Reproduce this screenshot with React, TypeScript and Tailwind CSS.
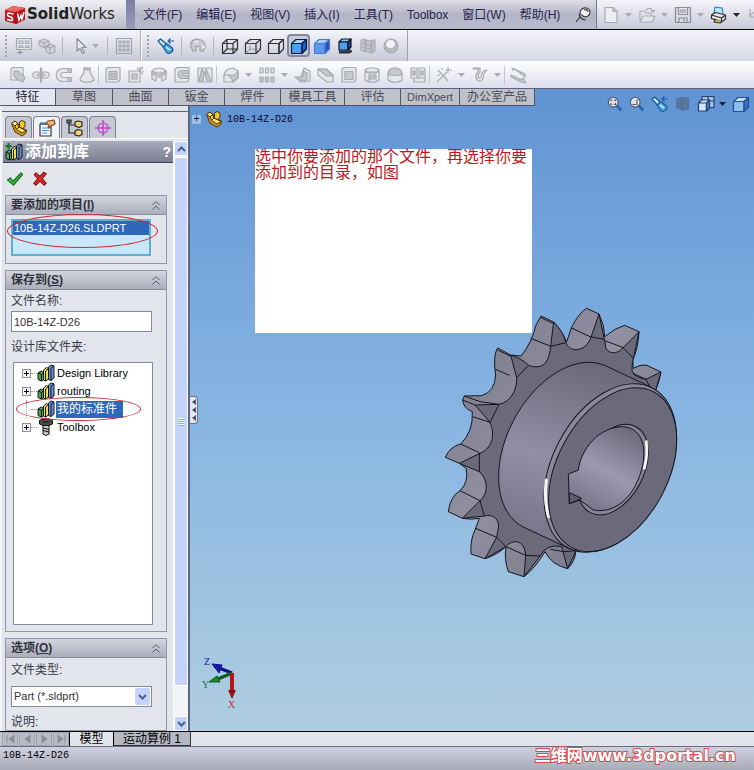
import { useState } from "react";
import type { ReactNode } from "react";

const DARK = "#17172b";
const DIM = "#a8aab2";

type GlyphProps = { children: ReactNode; size?: "sm" | "md"; stroke?: string; fill?: string };

const Glyph = ({ children, size = "md", stroke = DIM, fill = "none" }: GlyphProps) => (
  <svg
    viewBox="0 0 18 18"
    className={size === "md" ? "h-[18px] w-[18px] shrink-0" : "h-4 w-4 shrink-0"}
    fill={fill}
    stroke={stroke}
    strokeWidth="1.2"
    strokeLinejoin="round"
    aria-hidden="true"
  >
    {children}
  </svg>
);

const Cube = ({ top, front, side, line = DARK }: { top: string; front: string; side: string; line?: string }) => (
  <Glyph stroke={line}>
    <path d="M1.500 6.500 6 2.500h10.500L12 6.500Z" fill={top} />
    <path d="M1.500 6.500H12V16.500H1.500Z" fill={front} />
    <path d="M12 6.500 16.500 2.500v9.500L12 16.500Z" fill={side} />
  </Glyph>
);

const Flashlight = () => (
  <Glyph stroke="#1b5c93">
    <path d="M1 4 3.500 2l6 5-3 3Z" fill="#8fd0f2" />
    <path d="m6 10 3.500-3.500 6 4.500c1.500 3-2 6.500-5.500 5Z" fill="#4ba6e4" />
    <path d="m3 4 4 4M9 10l4 3" stroke="#e6f7ff" />
    <path d="M17 4h-6m2.500-2.500L11 4l2.500 2.500" stroke="#1d5a9b" />
  </Glyph>
);

const PartIcon = () => (
  <svg viewBox="0 0 18 18" className="h-[18px] w-[18px] shrink-0" stroke="#4a3600" strokeWidth="1" strokeLinejoin="round" aria-hidden="true">
    <path d="M1.500 4.500 5 2l3 2.500 1.500 3.500 7 3-.5 3-4 3-7-4Z" fill="#d99b1c" />
    <path d="M1.500 4.500 5 2l2.500 2.500L5 7Z" fill="#ffe680" />
    <path d="m5 7 2.500-2.500L9 8l-2.500 2.500Z" fill="#f3c63c" />
    <path d="M6.500 10.500 9 8l7 3.500-4 2.500Z" fill="#ffe070" />
    <path d="M9.500 3 12 1.500 15 3v4.500l-2.500 2-3-1.500Z" fill="#f3c63c" />
  </svg>
);

const BooksIcon = ({ plus = false }: { plus?: boolean }) => (
  <svg viewBox="0 0 18 18" className="h-[18px] w-[18px] shrink-0" stroke="#101820" strokeWidth="1" aria-hidden="true">
    <path d="m1 9 3-2 3 1.500v7L4.500 17 1 15.500Z" fill="#4fa64b" />
    <path d="m1 9 3.500 1.500V17M4.500 10.500 7 8.500" fill="none" />
    <path d="m6.500 6 3-2.500 2 1V15l-3 2-2-1Z" fill="#f1dc62" />
    <path d="m8.500 7 3-2.500M8.500 7v10" fill="none" />
    <path d="m11.500 3 2.500-2 3 1v12l-3 2.500-2.500-1Z" fill="#6c92d4" />
    <path d="m14 4 3-2M14 4v12.500" fill="none" />
    {plus ? <path d="M3.500 0v6M.5 3h6" stroke="#0f7a22" strokeWidth="2" /> : null}
  </svg>
);

const BoltIcon = () => (
  <svg viewBox="0 0 18 18" className="h-[18px] w-[18px] shrink-0" stroke="#111" strokeWidth="1" aria-hidden="true">
    <path d="M2.500 2.500 6 1h6l3.500 1.500V6L12 7.500H6L2.500 6Z" fill="#4a4a4a" />
    <path d="M6 7.500h6V16l-3 1.500L6 16Z" fill="#c9c9c9" />
    <path d="m6 10 6 1.500M6 12.500 12 14M6 4h6" fill="none" />
  </svg>
);

const DropArrow = ({ dark = false }: { dark?: boolean }) => (
  <svg viewBox="0 0 7 4" className="h-1 w-[7px] shrink-0" aria-hidden="true">
    <path d="M0 0h7L3.500 4Z" fill={dark ? "#23232e" : "#a9abb5"} />
  </svg>
);

const Separator = () => <span className="mx-1 h-[18px] w-px shrink-0 bg-[#b4b6c3]" />;

const Grip = () => (
  <span className="flex w-3 shrink-0 flex-col items-center gap-0.5">
    {[0, 1, 2, 3, 4, 5].map(i => (
      <span key={i} className="h-0.5 w-0.5 bg-[#a2a5b6]" />
    ))}
  </span>
);

const ToolButton = ({ label, active, children }: { label: string; active?: boolean; children: ReactNode }) => (
  <button
    type="button"
    aria-label={label}
    className={
      active
        ? "flex h-[23px] w-[23px] shrink-0 items-center justify-center rounded border-2 border-[#8287a0] bg-[#c9cbdb]"
        : "flex h-[23px] w-[23px] shrink-0 items-center justify-center"
    }
  >
    {children}
  </button>
);

const MENUS = ["文件(F)", "编辑(E)", "视图(V)", "插入(I)", "工具(T)", "Toolbox", "窗口(W)", "帮助(H)"];

const TitleBar = () => (
  <header className="flex h-[30px] shrink-0 items-stretch border-b border-black bg-gradient-to-b from-[#f4f4fa] to-[#c9cad8]">
    <div className="flex w-[126px] shrink-0 items-center gap-px bg-gradient-to-b from-[#f0f0f4] to-[#b9bac6] pl-1">
      <svg viewBox="0 0 22 20" className="h-5 w-[22px]" aria-hidden="true">
        <path d="M1 5 9 1l12 2v12l-9 4-11-3Z" fill="#c3171d" />
        <path d="M1 5 9 1l12 2-9 4Z" fill="#ee6a60" />
        <path d="M12 7v12" stroke="#7c0d10" />
        <path d="M9.500 9 5 8c-2 0-2 3 0 3.500l2 .5c2 .5 2 4 0 3.500L3 14.500" fill="none" stroke="#fff" strokeWidth="1.600" />
        <path d="m13.500 8.500 1.500 6.500 2-4.500 1 3.500 2-7" fill="none" stroke="#fff" strokeWidth="1.500" />
      </svg>
      <span className="font-['DejaVu_Sans'] text-[15px] leading-none text-[#222]">
        <b>Solid</b>Works
      </span>
    </div>
    <div className="w-[9px] shrink-0 bg-gradient-to-b from-[#7d7ea4] to-[#9b9cbc]" />
    <nav className="flex shrink-0 items-center gap-3.5 border-r border-[#77788c] bg-gradient-to-b from-[#dfdfe9] via-[#b4b5c6] to-[#b8b9ca] pr-1 pl-2 text-[#262450]">
      {MENUS.map(m => (
        <button key={m} type="button" className="whitespace-nowrap">
          {m}
        </button>
      ))}
      <Glyph stroke="#3c3c46">
        <path d="M7 4c3-4 9-2 9 2s-4 6-7 4-4-3-2-6Z" fill="#f2f2f5" />
        <path d="M5 8c1 4 3 6 7 6M6 11l-4 5M10 4c2-1 4 0 4 2" />
      </Glyph>
    </nav>
    <div className="flex min-w-0 flex-1 items-center gap-[3px] overflow-hidden pl-0.5">
      <ToolButton label="新建">
        <Glyph>
          <path d="M3 1.500h8l4 4v11H3ZM11 1.500v4h4" fill="#ececf2" />
        </Glyph>
      </ToolButton>
      <DropArrow />
      <ToolButton label="打开">
        <Glyph>
          <path d="M2 16V5h5l1 2h5v3M2 16l3-6h12l-3 6ZM8 4c3-3 6-2 7 2m-2-2 2 2 2-2" fill="#e4e4ec" />
        </Glyph>
      </ToolButton>
      <DropArrow />
      <ToolButton label="保存">
        <Glyph stroke="#8b8c97">
          <path d="M1.500 1.500h15v15h-15ZM4.500 1.500v7h9v-7M5 16.500V12h8v4.500M6 4h6M6 6h6M10 13v3" fill="#dcdce6" />
        </Glyph>
      </ToolButton>
      <DropArrow />
      <ToolButton label="打印">
        <Glyph stroke="#2f3036">
          <path d="m4 7 1-6 7 1 1 6" fill="#b9e4fa" stroke="#2e7cb6" />
          <path d="m1.500 9 4-2.500 10 2.500v4l-4 3-10-3.500Z" fill="#e9e9ea" />
          <path d="m1.500 9 10 3v4m0-4 4-3M4 13l7 2.500" />
          <path d="m5 14-1 2 6 1 2-2" fill="#e2cd4a" />
        </Glyph>
      </ToolButton>
      <DropArrow dark />
      <ToolButton label="撤消">
        <Glyph>
          <path d="M4 3v8h8M4 10c4-6 10-5 12 1" />
        </Glyph>
      </ToolButton>
    </div>
  </header>
);

const ViewToolbar = () => (
  <div className="flex h-[31px] shrink-0 items-stretch bg-gradient-to-b from-[#f3f3fc] to-[#d9dae8]">
    <div className="flex w-[141px] shrink-0 items-center border-r border-[#a9abba] bg-gradient-to-b from-[#f5f5fc] to-[#c7c9d6]">
      <Grip />
      <ToolButton label="视图布局">
        <Glyph>
          <path d="M1.500 1.500h15v11h-15ZM4 4h4v2.500H4ZM10.500 4H14v2.500h-3.500ZM4 9h4v1.500H4ZM10.500 9H14v1.500h-3.500Z" fill="#e2e3e9" />
          <path d="M2 15.500h6M5 12.500v5" stroke="#8d8f98" />
        </Glyph>
      </ToolButton>
      <ToolButton label="装配体">
        <Glyph>
          <path d="m1 4 5-2 5 2v5l-5 2-5-3ZM1 4l5 2v5M6 6l5-2M8 9l4-2 5 2v6l-5 2-4-3ZM8 9l4 2v6M12 11l5-2" fill="#d4d5dc" />
        </Glyph>
      </ToolButton>
      <Separator />
      <span className="w-0.5" />
      <ToolButton label="选择">
        <Glyph stroke="#8b8e9d" fill="#e8e8f0">
          <path d="m5 1.500 9 9H9.500l3 5-2 1-2.500-5L5 14Z" />
        </Glyph>
      </ToolButton>
      <DropArrow />
      <span className="w-1" />
      <Separator />
      <ToolButton label="网格">
        <Glyph stroke="#a0a2ac">
          <path d="M1.500 1.500h15v15h-15ZM4 4h2v2H4ZM8 4h2v2H8ZM12 4h2v2h-2ZM4 8h2v2H4ZM8 8h2v2H8ZM12 8h2v2h-2ZM4 12h2v2H4ZM8 12h2v2H8ZM12 12h2v2h-2Z" />
        </Glyph>
      </ToolButton>
    </div>
    <div className="flex w-[267px] shrink-0 items-center border-r border-l border-r-[#9fa1b0] border-l-white bg-gradient-to-b from-[#f5f5fc] to-[#c7c9d6]">
      <Grip />
      <ToolButton label="上一视图">
        <Flashlight />
      </ToolButton>
      <Separator />
      <ToolButton label="重建模型">
        <Glyph stroke="#a0a2aa">
          <path d="M2 10C0 4 6 1 10 2.500c4 0 7 4 6 8l-2 4-3-1v-4H7v4l-3 1Z" fill="#c9cad1" />
          <path d="m5 6 3-2 1 3M13 8l1 3 2-2" stroke="#f4f4f8" />
        </Glyph>
      </ToolButton>
      <Separator />
      <ToolButton label="线架图">
        <Glyph stroke="#333">
          <path d="M1.500 6.500H12v10H1.500ZM6 2.500h10.500V12H6ZM1.500 6.500 6 2.500M12 6.500l4.500-4M12 16.500l4.500-4.500M1.500 16.500 6 12" />
        </Glyph>
      </ToolButton>
      <ToolButton label="隐藏线可见">
        <Glyph stroke="#333">
          <path d="M1.500 6.500 6 2.500h10.500V12L12 16.500H1.500ZM1.500 6.500H12v10M12 6.500l4.500-4" />
          <path d="M6 3v9h10M6 12l-4 4" stroke="#777" strokeDasharray="1.500 1.500" />
        </Glyph>
      </ToolButton>
      <ToolButton label="消除隐藏线">
        <Cube top="none" front="none" side="none" line="#333" />
      </ToolButton>
      <ToolButton label="带边线上色" active>
        <Cube top="#a9d4ff" front="#4ba0f4" side="#1f5cc0" line="#10183c" />
      </ToolButton>
      <ToolButton label="上色">
        <Cube top="#a4ccf8" front="#5a98f0" side="#2356bd" line="#4a7bd0" />
      </ToolButton>
      <ToolButton label="阴影">
        <Glyph stroke="#101426">
          <path d="M3 15h10l2.500-1.500" stroke="#2b3348" strokeWidth="3" />
          <path d="m3 5 3-3h9l-3 3Z" fill="#8ec3f5" />
          <path d="M3 5h9v8H3Z" fill="#4fa0ea" />
          <path d="m12 5 3-3v8l-3 3Z" fill="#164a99" />
        </Glyph>
      </ToolButton>
      <ToolButton label="剖面">
        <Glyph>
          <path d="m2 3 4-1v13l-4-2ZM7 3l5 1v12l-5-2ZM13 3h3v11l-3 2ZM3 6l2 1M3 10l2 1M8 7l3 1M8 11l3 1" fill="#c5c6cd" />
        </Glyph>
      </ToolButton>
      <ToolButton label="渲染">
        <Glyph>
          <circle cx="9" cy="9" r="7" fill="#b7b9c1" />
          <ellipse cx="8.500" cy="7" rx="4.500" ry="4" fill="#f4f4f8" stroke="none" />
        </Glyph>
      </ToolButton>
    </div>
  </div>
);

// d is filled light, shade is the darker face of the same icon
type Feature = { name: string; d: string; shade?: string; drop?: boolean; sep?: boolean };

const FEATURES: Feature[] = [
  { name: "拉伸凸台", d: "M2 14V3l2-1.500h10V12L12 14Z", shade: "M5 5h5v3h3l3 4-2 4-5-2-4-4Z" },
  { name: "旋转凸台", d: "M7 6H3C0 7 0 11 3 12h4ZM11 6h4c3 1 3 5 0 6h-4Z", shade: "M8.500 2h1v14h-1ZM4 9h3M11 9h3" },
  { name: "扫描", d: "M16 2.500H8c-9 0-9 13 0 13h8v-4H8c-3 0-3-5 0-5h8Z", shade: "M13 2.500h3v4h-3ZM13 11.500h3v4h-3Z" },
  { name: "放样凸台", d: "M6 2h6v3c0 4 4 6 4 9-3 3-11 3-14 0 0-3 4-5 4-9Z", shade: "M6 2h6v2H6Z", sep: true },
  { name: "拉伸切除", d: "M2 16V3l2-1.500h12V14l-2 2Z", shade: "M5 5.500h8v8H5ZM7.500 8h3v3h-3Z" },
  { name: "异型孔向导", d: "M2 5h11v11H2Z", shade: "M5 8h5v5H5ZM10 2l6 6M16 1l-4 4M13 1v2M17 5h-2" },
  { name: "旋转切除", d: "M2 5c3-4 11-4 14 0v8l-4 2v-4H6v4l-4-2Z", shade: "M2 5c4 3 10 3 14 0v3c-4 2-10 2-14 0Z" },
  { name: "扫描切除", d: "M2 16V3l2-1.500h12V14l-2 2Z", shade: "M15 4.500H9c-5 0-5 8 0 8h6v-3h-5c-1 0-1-2 0-2h5Z" },
  { name: "放样切除", d: "M2 2h14v14H2Z", shade: "M6 3 3 15h4l1-8ZM10 3l5 12h-4L9 7Z", sep: true },
  { name: "圆角", d: "M2 15V9c1-5 4-7 9-7l5 3v7l-5 4H2Z", shade: "M2 9c4-1 7 1 9 7l5-4V5l-3 4Z", drop: true },
  { name: "阵列", d: "M2 2h3v5H2ZM7.500 2h3v5h-3ZM13 2h3v5h-3Z", shade: "M2 11h3v5H2ZM7.500 11h3v5h-3ZM13 11h3v5h-3Z", drop: true },
  { name: "筋", d: "M1 11h6l3-9 6 3v10l-9 1Z", shade: "M4 11h5V5l4 2v7l-6 1Z" },
  { name: "拔模", d: "M1 3h8l7 6v7h-6L1 9Z", shade: "m1 3 9 7h6L9 3Z" },
  { name: "抽壳", d: "M2 16V3l2-1.500h12V14l-2 2Z", shade: "M5 5.500h8v8H5Z" },
  { name: "包覆", d: "M2 4c3-3 11-3 14 0v10c-3 3-11 3-14 0Z", shade: "M2 5c3 3 11 3 14 0M6 9h2v5H6ZM10 9h3v4h-3Z" },
  { name: "圆顶", d: "M2 8C2 0 16 0 16 8v6c-3 3-11 3-14 0Z", shade: "M2 8c0-8 14-8 14 0-4 2-10 2-14 0Z" },
  { name: "镜向", d: "M2 2h6v10H2ZM10 2h6v10h-6ZM5 12h11v4H5Z", shade: "M4 5h2v4H4ZM12 5h2v4h-2Z", sep: true },
  { name: "参考几何体", d: "M2 16 12 6M3 4l10 11", shade: "M13 1v6M10 4h7M2 9h3M7 2v2", drop: true },
  { name: "曲线", d: "M2 3h5v3c-4 4-2 9 2 9 5 0 2-9 7-11C9 4 11 12 9 12c-3 0-2-3 0-6V2H3Z", drop: true, sep: true },
  { name: "Instant3D", d: "m2 2 13 6v3l-2-2-2-1-2-2-2-1-2-2-2 1Z", shade: "m1 9 11 5 1-2 3 5-5-1-10-5Z" },
];

const FeatureToolbar = () => (
  <div className="flex h-7 shrink-0 items-center overflow-hidden border-b border-[#5f6278] bg-gradient-to-b from-white to-[#dcdeee] pl-1.5">
    {FEATURES.map(f => (
      <div key={f.name} className="flex shrink-0 items-center">
        <ToolButton label={f.name}>
          <Glyph>
            <path d={f.d} fill="#e6e7ed" />
            {f.shade ? <path d={f.shade} fill="#c6c8cf" /> : null}
          </Glyph>
        </ToolButton>
        {f.drop ? (
          <span className="flex w-[13px] justify-center">
            <DropArrow />
          </span>
        ) : null}
        {f.sep ? <span className="mr-0.5 h-[18px] w-px bg-[#c2c4d0]" /> : null}
      </div>
    ))}
  </div>
);

const COMMAND_TABS = [
  { label: "特征", width: "w-14" },
  { label: "草图", width: "w-[57px]" },
  { label: "曲面", width: "w-14" },
  { label: "钣金", width: "w-14" },
  { label: "焊件", width: "w-14" },
  { label: "模具工具", width: "w-16" },
  { label: "评估", width: "w-14" },
  { label: "DimXpert", width: "w-[59px]" },
  { label: "办公室产品", width: "w-[75px]" },
];

const CommandTabs = () => {
  const [active, setActive] = useState("特征");
  return (
    <div className="flex h-[17px] shrink-0 self-start" role="tablist">
      {COMMAND_TABS.map(t => (
        <button
          key={t.label}
          type="button"
          role="tab"
          aria-selected={active === t.label}
          onClick={() => setActive(t.label)}
          className={`${t.width} shrink-0 border-r border-b text-center leading-4 whitespace-nowrap ${
            active === t.label
              ? "border-r-[#50536a] border-b-[#50536a] bg-[#e4e6f2] text-[#22222c]"
              : "border-[#50536a] bg-[#bfc1cb] text-[#4a4b57]"
          } ${t.label === "DimXpert" ? "text-[11px]" : ""}`}
        >
          {t.label}
        </button>
      ))}
    </div>
  );
};

const PanelTabs = () => {
  const tab = "flex h-[22px] w-[27px] items-center justify-center rounded-t border border-b-0 border-[#7d8091]";
  return (
    <div className="flex gap-px border-b border-white pl-[3px]">
      <button type="button" aria-label="特征树" className={`${tab} bg-[#c6c9d3]`}>
        <PartIcon />
      </button>
      <button type="button" aria-label="属性" className={`${tab} bg-[#f1f2f8]`}>
        <Glyph stroke="#333">
          <path d="M2 5h11v12H2Z" fill="#fff" />
          <path d="M2 4.500h11" stroke="#2f6fc0" strokeWidth="2" />
          <path d="M4 9h7M4 11.500h7M4 14h5" stroke="#4a8bd0" />
          <path d="m8 5 2-3 6-1 1 4-4 2-2 2-1-1 1-2Z" fill="#f0b27c" stroke="#7c4a1e" />
        </Glyph>
      </button>
      <button type="button" aria-label="配置" className={`${tab} bg-[#c6c9d3]`}>
        <Glyph stroke="#222">
          <path d="M3 1v13h6M3 6h6M1 1h4v3H1Z" />
          <path d="m9 3 3-1 4 1v4l-3 1.500L9 7ZM9 12l3-1.500 4 1v4l-3 1.500-4-1Z" fill="#f3cf70" />
        </Glyph>
      </button>
      <button type="button" aria-label="尺寸专家" className={`${tab} bg-[#c6c9d3]`}>
        <Glyph stroke="#b04fc4">
          <circle cx="9" cy="9" r="5" fill="#e2b3ea" />
          <path d="M9 1v16M1 9h16" strokeWidth="1.500" />
        </Glyph>
      </button>
    </div>
  );
};

type GroupProps = { title: string; hotkey: string; grow?: boolean; children: ReactNode };

const Group = ({ title, hotkey, grow, children }: GroupProps) => (
  <section
    className={`mr-1.5 ml-[5px] flex flex-col border border-[#9296a6] ${grow ? "min-h-0 flex-1" : "shrink-0"}`}
  >
    <h2 className="flex h-[19px] shrink-0 items-center justify-between border-b border-[#8a8d9d] bg-gradient-to-b from-[#d3d5de] to-[#abaebb] pr-1.5 pl-[5px] leading-none font-bold text-[#30323f]">
      <span>
        {title}(<u>{hotkey}</u>)
      </span>
      <svg viewBox="0 0 8 9" className="h-[9px] w-2" fill="none" stroke="#5a5d70" aria-hidden="true">
        <path d="m.5 4 3.500-3.500L7.500 4M.5 8.500 4 5l3.500 3.500" />
      </svg>
    </h2>
    {children}
  </section>
);

const FOLDERS = ["Design Library", "routing", "我的标准件", "Toolbox"];

const FolderTree = () => {
  const [selected, setSelected] = useState("我的标准件");
  return (
    <ul className="relative mr-[13px] mb-1.5 ml-[7px] min-h-0 flex-1 border border-[#848b9c] bg-white pt-px pl-2 text-black">
      {FOLDERS.map(f => (
        <li key={f} className="flex h-[18px] items-center">
          {f === "我的标准件" ? (
            <span className="ml-1 h-[18px] w-[5px] border-l border-dotted border-[#a0a0a0]" />
          ) : (
            <button
              type="button"
              aria-label={`展开 ${f}`}
              className="flex h-[9px] w-[9px] items-center justify-center border border-[#8a93a5] bg-[#f4f3ee]"
            >
              <svg viewBox="0 0 5 5" className="h-[5px] w-[5px]" stroke="#000" aria-hidden="true">
                <path d="M2.500 0v5M0 2.500h5" />
              </svg>
            </button>
          )}
          <span className="w-1.5 border-t border-dotted border-[#a0a0a0]" />
          {f === "Toolbox" ? <BoltIcon /> : <BooksIcon />}
          <button
            type="button"
            onClick={() => setSelected(f)}
            className={`ml-px h-[17px] pl-px leading-4 whitespace-nowrap ${
              f === selected ? "bg-[#2f67b9] pr-1.5 text-white" : "text-[11px]"
            }`}
          >
            {f}
          </button>
        </li>
      ))}
      <span className="pointer-events-none absolute top-[34px] left-0.5 h-6 w-[125px] rounded-[50%] border border-[#d12a34]" />
    </ul>
  );
};

const ScrollArrow = ({ down = false }: { down?: boolean }) => (
  <button
    type="button"
    aria-label={down ? "向下滚动" : "向上滚动"}
    className="flex h-[15px] shrink-0 items-center justify-center rounded-xs border border-white bg-[#c3d3fb]"
  >
    <svg viewBox="0 0 9 6" className="h-1.5 w-[9px]" fill="none" stroke="#4a5f8c" strokeWidth="2" aria-hidden="true">
      <path d={down ? "m1 1 3.500 3.500L8 1" : "M1 5l3.500-3.500L8 5"} />
    </svg>
  </button>
);

const PropertyPanel = () => {
  const [fileName, setFileName] = useState("10B-14Z-D26");
  return (
    <aside className="flex w-[190px] shrink-0 flex-col border-r-2 border-l-2 border-r-[#5a6783] border-l-[#f4f5fa] bg-[#e3e5ed]">
      <div className="mb-1 h-1.5 shrink-0 border-b border-[#5d6178]" />
      <PanelTabs />
      <div className="flex min-h-0 flex-1 pt-0.5">
        <div className="-ml-0.5 flex min-w-0 flex-1 flex-col overflow-hidden">
          <div className="ml-[3px] flex h-[22px] shrink-0 items-center border-b border-[#3f4256] bg-gradient-to-b from-[#a9acba] to-[#7a7d90] pr-0.5 pl-0.5 text-white">
            <BooksIcon plus />
            <h1 className="flex-1 pl-0.5 text-[16px] leading-none font-bold">添加到库</h1>
            <button type="button" aria-label="帮助" className="text-[14px] leading-none font-bold">
              ?
            </button>
          </div>
          <div className="flex h-8 shrink-0 items-center gap-2 pl-1.5">
            <button type="button" aria-label="确定">
              <Glyph stroke="#136b1c">
                <path d="m1.500 10 3-2 2.500 3.500L15 3l1.500 1.500L7.500 15Z" fill="#3fd34c" />
              </Glyph>
            </button>
            <button type="button" aria-label="取消">
              <Glyph size="sm" stroke="#8c1010">
                <path d="m2.500 4 2-2L9 6l4-4.500 3 1.500-4.500 5.500L16 14l-2.500 2L9 11.500 4.500 16 2 14l4.500-5.500Z" fill="#dd2c2c" />
              </Glyph>
            </button>
          </div>
          <div className="flex min-h-0 flex-1 flex-col gap-1.5">
            <Group title="要添加的项目" hotkey="I">
              <div className="relative mt-1 mr-[15px] mb-[7px] ml-[5px] h-[37px] border-2 border-[#5fb0d0] bg-[#c8e8fa]">
                <div className="h-3.5 bg-[#2f67b9] pl-px text-[11px] leading-[14px] text-white">10B-14Z-D26.SLDPRT</div>
                <span className="pointer-events-none absolute -top-[7px] -left-[6px] h-[34px] w-[151px] rounded-[50%] border border-[#d12a34]" />
              </div>
            </Group>
            <Group title="保存到" hotkey="S" grow>
              <label htmlFor="file-name" className="mt-0.5 pl-[5px] leading-[18px]">
                文件名称:
              </label>
              <input
                id="file-name"
                value={fileName}
                onChange={e => setFileName(e.target.value)}
                className="mt-px mr-3.5 ml-[5px] h-[21px] min-w-0 shrink-0 border border-[#848b9c] bg-white pl-0.5 text-[11px] text-[#333]"
              />
              <div className="mt-1.5 mb-1.5 pl-[5px] leading-[18px]">设计库文件夹:</div>
              <FolderTree />
            </Group>
            <Group title="选项" hotkey="O">
              <div className="flex h-[72px] flex-col overflow-hidden">
                <label htmlFor="file-type" className="mt-[3px] pl-[5px] leading-[18px]">
                  文件类型:
                </label>
                <div className="relative mt-[7px] mr-3.5 ml-[5px]">
                  <select
                    id="file-type"
                    className="h-[21px] w-full appearance-none border border-[#848b9c] bg-white pl-0.5 text-[11px] text-[#333]"
                  >
                    <option>Part (*.sldprt)</option>
                  </select>
                  <span className="pointer-events-none absolute top-0.5 right-0.5 flex h-[17px] w-[15px] items-center justify-center rounded-xs bg-[#c3d3fb]">
                    <svg viewBox="0 0 9 6" className="h-1.5 w-[9px]" fill="none" stroke="#4a5f8c" strokeWidth="2" aria-hidden="true">
                      <path d="m1 1 3.500 3.500L8 1" />
                    </svg>
                  </span>
                </div>
                <div className="mt-1.5 pl-[5px] leading-[18px]">说明:</div>
              </div>
            </Group>
          </div>
        </div>
        <div className="flex w-[15px] shrink-0 flex-col border-l border-white bg-[#f3f4f8]">
          <ScrollArrow />
          <div className="mt-px mb-[30px] flex flex-1 flex-col items-center justify-center gap-px rounded-xs border border-white bg-[#c5d4fb]">
            {[0, 1, 2, 3].map(i => (
              <span key={i} className="h-px w-1.5 bg-[#f2f6ff] shadow-[0_1px_0_#98aee0]" />
            ))}
          </div>
          <ScrollArrow down />
        </div>
      </div>
    </aside>
  );
};

const FRONT_FACE =
  "M371 66 362 138C358 180 345 198 325 200 310 202 302 198 296 196 280 180 262 172 242 165L260 233C262 265 245 305 207 313L135 315 180 367C194 400 192 440 150 460L88 490 148 515C175 540 175 580 150 602L97 655 163 648C190 640 212 660 204 690L200 712 165 776 228 740C245 718 285 715 287 768L282 830 330 768Q350 730 395 740L413 806 438 752 560 500 678 268 693 216 648 238Q600 230 606 200L610 175 627 95 582 140C565 162 540 165 528 145L523 118 507 42 482 115C470 145 445 150 436 149 420 148 412 138 408 128 402 105 390 85 371 66Z";

const SILHOUETTE =
  "M273 168Q305 130 318 75L333 48 371 66Q398 95 410 125L425 82Q445 40 470 25L507 42Q524 75 524 110L555 88 584 76 627 95Q625 145 608 180L610 205Q630 193 648 195L693 216Q688 245 678 268L560 500 438 752Q435 785 413 806 365 795 345 755 315 805 282 830L235 815Q222 780 228 740 200 765 165 776L123 762Q120 720 135 690L148 655Q125 660 97 655L55 635Q60 590 90 572 118 545 108 505L88 490 46 472Q60 440 92 432 130 395 127 335 100 325 98 300L103 288 155 287Q195 275 197 225 188 165 203 144L242 165Z";

const Sprocket = () => (
  <svg viewBox="0 0 780 870" className="h-[290px] w-[260px]" stroke="#16161e" strokeWidth="3" strokeLinejoin="round" role="img" aria-label="10B-14Z-D26">
    <defs>
      <linearGradient id="tooth" x1="0" y1="0" x2="1" y2="1">
        <stop offset="0" stopColor="#777686" />
        <stop offset=".45" stopColor="#9190a2" />
        <stop offset="1" stopColor="#72717f" />
      </linearGradient>
      <linearGradient id="hub" gradientUnits="userSpaceOnUse" x1="420" y1="190" x2="260" y2="690">
        <stop offset="0" stopColor="#6d6c7d" />
        <stop offset=".55" stopColor="#918fa4" />
        <stop offset="1" stopColor="#77768a" />
      </linearGradient>
      <linearGradient id="bore" x1=".7" y1="0" x2=".2" y2="1">
        <stop offset="0" stopColor="#6e6d7f" />
        <stop offset=".5" stopColor="#9a99ae" />
        <stop offset="1" stopColor="#747386" />
      </linearGradient>
    </defs>
    <path d={SILHOUETTE} fill="url(#tooth)" />
    <path d={FRONT_FACE} fill="#6b6a7a" />
    <g fill="none">
      <path d="M302 115 363 139 408 128M197 208 238 226M260 233 294 197M98 300 135 315M128 350 180 367 207 313M103 288 150 305 207 313M92 432 148 458 148 515M90 572 150 602 163 648M137 685 200 712 228 740M228 740 287 766 330 768M362 748 400 755 438 752M422 83 480 110 523 118M524 122 578 142 610 175M609 220 648 238 660 262" />
      <path d="M203 150 242 169M333 53 369 70" />
    </g>
    <path d="M664 262 528 198A271 173 -62 0 0 282 682L418 746Z" fill="url(#hub)" />
    <ellipse cx="541" cy="504" rx="271" ry="173" transform="rotate(-62 541 504)" fill="#8b8a9c" />
    <path d="M349 540Q341 600 356 650" fill="none" stroke="#f4f4f8" strokeWidth="9" strokeLinecap="round" />
    <ellipse cx="548" cy="509" rx="264" ry="166" transform="rotate(-62 548 509)" fill="#6b6a7b" />
    <ellipse cx="549" cy="509" rx="146" ry="91" transform="rotate(-62 549 509)" fill="#858496" />
    <path d="M649 425Q654 465 643 505" fill="none" stroke="#f7f7fa" strokeWidth="8" strokeLinecap="round" />
    <path d="M445 510C452 450 505 380 580 380 640 385 655 450 630 525 600 610 540 640 490 630L450 600 418 611 415 522Z" fill="url(#bore)" />
    <path d="M418 578 455 595 418 611Z" fill="#5f5e6e" />
  </svg>
);

const AxisTriad = () => (
  <svg viewBox="0 0 40 56" className="h-14 w-10 font-['Liberation_Serif',serif]" aria-hidden="true">
    <path d="m30 18-13-5" stroke="#10108a" strokeWidth="3" />
    <path d="m10 9 10 1-3 8Z" fill="#1a1ab0" stroke="#10108a" />
    <path d="m30 18-14 6" stroke="#0a5a20" strokeWidth="3" />
    <path d="m7 27 8-6 3 6Z" fill="#148a30" stroke="#0a5a20" />
    <path d="M30 18v20" stroke="#b51414" strokeWidth="4" />
    <path d="M26 35h8l-4 9Z" fill="#8e1010" />
    <text x="2" y="10" fontSize="10" fill="#2020a0">Z</text>
    <text x="0" y="33" fontSize="10" fill="#187038">Y</text>
    <text x="26" y="53" fontSize="10" fill="#d22">X</text>
  </svg>
);

const HeadsUpToolbar = () => (
  <div className="absolute top-1.5 right-1 flex items-center gap-1.5">
    <Glyph size="sm" stroke="#4a5260">
      <path d="m11 11 5 5" stroke="#2a62b4" strokeWidth="3" />
      <circle cx="7" cy="7" r="5.500" fill="#dfe3e8" />
      <path d="M4.500 6V4.500H6M8 4.500h1.500V6M9.500 8v1.500H8M6 9.500H4.500V8" />
    </Glyph>
    <Glyph size="sm" stroke="#4a5260">
      <path d="m11 11 5 5" stroke="#2a62b4" strokeWidth="3" />
      <circle cx="7" cy="7" r="5.500" fill="#dfe3e8" />
      <path d="M4 9.500h3M9 4v5.500H7.500" />
    </Glyph>
    <Flashlight />
    <Glyph size="sm" stroke="#4d6f9c">
      <path d="m2 3 5-1v13l-5-2ZM8 2h7v13l-7 1Z" fill="#56789f" />
    </Glyph>
    <span className="flex items-center gap-1">
      <Glyph stroke="#27406e">
        <path d="M5 1.500h12v11H5ZM11 1.500v11M5 6h12" fill="#9fc4ea" />
        <path d="m1.500 8 3-3h8l-3 3ZM1.500 8h8v8h-8Z" fill="#cfe7fa" />
        <path d="m9.500 8 3-3v8l-3 3Z" fill="#3d7cc8" />
      </Glyph>
      <DropArrow dark />
    </span>
    <Cube top="#c3e0f8" front="#8dbfee" side="#3471c4" line="#27508c" />
  </div>
);

const Viewport = () => (
  <main className="relative min-w-0 flex-1 overflow-hidden">
    <div className="flex items-center gap-1 pt-1 pl-0.5 font-['Liberation_Mono',monospace] text-[10px] text-[#05062c]">
      <button type="button" aria-label="展开零件" className="h-[9px] w-[9px] bg-[#9fc0e6] text-center leading-[9px]">
        +
      </button>
      <PartIcon />
      <span>10B-14Z-D26</span>
    </div>
    <button
      type="button"
      aria-label="折叠面板"
      className="absolute top-[290px] left-0 flex h-7 w-2 flex-col items-center justify-center gap-0.5 rounded-r border border-l-0 border-[#67708c] bg-[#e6e8f0]"
    >
      {[0, 1, 2].map(i => (
        <svg key={i} viewBox="0 0 4 6" className="h-1.5 w-1" aria-hidden="true">
          <path d="M4 0v6L0 3Z" fill="#4c5068" />
        </svg>
      ))}
    </button>
    <p className="absolute top-[43px] left-[65px] h-[184px] w-[277px] bg-white text-[16px] leading-4 text-[#c01820]">
      选中你要添加的那个文件，再选择你要添加到的目录，如图
    </p>
    <div className="absolute top-[194px] left-60">
      <Sprocket />
    </div>
    <div className="absolute bottom-5 left-3">
      <AxisTriad />
    </div>
  </main>
);

const NAV_STEPS = [
  { label: "第一个", d: "M3 2v8M10 2 5 6l5 4Z" },
  { label: "上一个", d: "M9 2 4 6l5 4Z" },
  { label: "下一个", d: "m4 2 5 4-5 4Z" },
  { label: "最后一个", d: "M10 2v8M3 2l5 4-5 4Z" },
];

const BottomTabs = () => (
  <div className="flex h-4 shrink-0 items-stretch border-t border-b border-t-black border-b-[#6c6e80] bg-[#e2e4eb] leading-3 text-black">
    <div className="flex w-[69px] shrink-0 gap-px bg-[#c5c7d0] pl-0.5">
      {NAV_STEPS.map(n => (
        <button key={n.label} type="button" aria-label={n.label} className="flex w-4 items-center justify-center border border-[#a0a2ae] bg-[#b9bbc6]">
          <svg viewBox="0 0 12 12" className="h-3 w-3" fill="#8c8e9c" stroke="#8c8e9c" aria-hidden="true">
            <path d={n.d} />
          </svg>
        </button>
      ))}
    </div>
    <button type="button" className="w-[45px] shrink-0 border-r border-l border-black bg-[#e2e4eb]">
      模型
    </button>
    <button type="button" className="w-[77px] shrink-0 border-r border-b border-[#33343f] bg-[#b5b7c2] whitespace-nowrap">
      运动算例 1
    </button>
  </div>
);

export default function App() {
  return (
    <div className="flex h-screen flex-col overflow-hidden bg-[#e3e5ed] font-['Liberation_Sans','Noto_Sans_CJK_SC',sans-serif] text-[12px] text-[#3a3b48]">
      <TitleBar />
      <ViewToolbar />
      <FeatureToolbar />
      <div className="relative flex min-h-0 flex-1 flex-col bg-gradient-to-b from-[#6093d3] via-[#87b5e2] to-[#afcde0]">
        <CommandTabs />
        <div className="flex min-h-0 flex-1">
          <PropertyPanel />
          <Viewport />
        </div>
        <HeadsUpToolbar />
      </div>
      <BottomTabs />
      <footer className="flex h-[23px] shrink-0 items-start justify-between bg-gradient-to-b from-[#cfd1e0] to-[#a9abb9] pr-[18px] pl-[3px] text-black">
        <span className="font-['Liberation_Mono',monospace] text-[10px] leading-[18px]">10B-14Z-D26</span>
        <span className="font-['DejaVu_Sans','Noto_Sans_CJK_SC',sans-serif] text-[16px] leading-[18px] font-bold text-white [paint-order:stroke_fill] [-webkit-text-stroke:2px_#d8484c]">
          三维网www.3dportal.cn
        </span>
      </footer>
    </div>
  );
}
